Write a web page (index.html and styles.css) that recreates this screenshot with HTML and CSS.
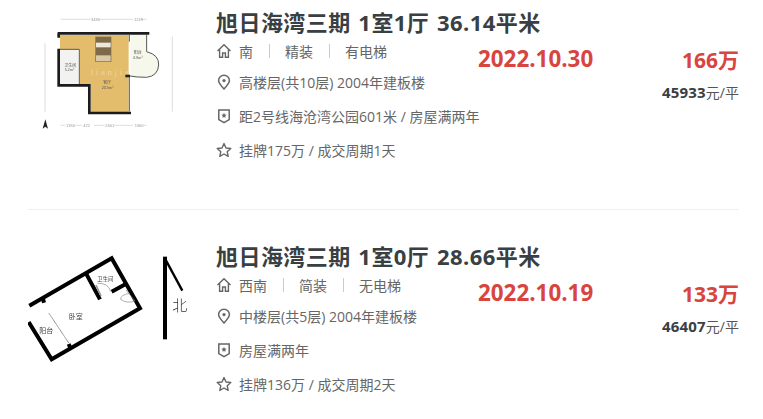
FILE: index.html
```html
<!DOCTYPE html>
<html lang="zh">
<head>
  <meta charset="UTF-8" />
  <title>成交列表</title>
  <link rel="stylesheet" href="styles.css">
</head>
<body>
  <!-- icon defs -->
  <svg class="defs" width="0" height="0">
    <symbol id="i-house" viewBox="0 0 16 16">
      <path d="M1.5 8 8 1.8 14.5 8M3.6 6.6V14.2H6.6V10H9.4V14.2H12.4V6.6" fill="none" stroke="currentColor" stroke-width="1.4"/>
    </symbol>
    <symbol id="i-pin" viewBox="0 0 16 16">
      <path d="M8 15C5 11.8 2.6 9.4 2.6 6.6A5.4 5.4 0 0 1 13.4 6.6C13.4 9.4 11 11.8 8 15Z" fill="none" stroke="currentColor" stroke-width="1.5"/>
      <circle cx="8" cy="6.6" r="1.6" fill="currentColor"/>
    </symbol>
    <symbol id="i-shield" viewBox="0 0 16 16">
      <path d="M2.8 2H13.2V11.6L8 14.6 2.8 11.6Z" fill="none" stroke="currentColor" stroke-width="1.5"/>
      <path d="M8 4.8 8.8 6.6 10.6 6.8 9.3 8 9.6 9.8 8 8.9 6.4 9.8 6.7 8 5.4 6.8 7.2 6.6Z" fill="currentColor"/>
    </symbol>
    <symbol id="i-star" viewBox="0 0 16 16">
      <path d="M8 1.6 10 6 14.8 6.5 11.2 9.7 12.2 14.4 8 12 3.8 14.4 4.8 9.7 1.2 6.5 6 6Z" fill="none" stroke="currentColor" stroke-width="1.4" stroke-linejoin="round"/>
    </symbol>
  </svg>

  <div class="list">
    <div class="item">
      <svg class="thumb plan-a" viewBox="28 8 172 150">
        <g transform="translate(20 0) scale(.3333)">
          <g class="dim">
            <path d="M122 58H212M238 58H340M368 58H380M122 376H136M166 376H186M222 376H254M282 376H340M370 376H380M75 130V335M457 110V335"/>
          </g>
          <g class="dim-text" font-size="12">
            <text x="213" y="62">3480</text>
            <text x="342" y="62">1249</text>
            <text x="138" y="380">1350</text>
            <text x="190" y="380">422</text>
            <text x="256" y="380">2401</text>
            <text x="344" y="380">1300</text>
          </g>
          <path class="floor" d="M120 105H326V336H212V252H180V148H120Z"/>
          <path class="balcony" d="M332 105H380V155Q418 165 416 195Q414 228 380 232H332Z"/>
          <rect class="bath" x="120" y="150" width="56" height="104"/>
          <rect x="226" y="110" width="48" height="76" fill="#7d6a4a"/>
          <rect x="228" y="128" width="44" height="14" fill="#eee8d8"/>
          <rect x="228" y="166" width="44" height="18" fill="#d9c9a4"/>
          <text class="mark" x="212" y="224" font-size="26" textLength="114">lianjia</text>
          <path class="wall-thin" d="M116 148H178V254"/>
          <path class="wall" d="M113 100H388M116 100V113M116 146V256H208V339H333"/>
          <path class="wall-thin" d="M328 105V125M328 230V335M380 105V155M380 155Q418 165 416 195Q414 228 380 232Q350 232 330 228"/>
          <rect x="316" y="224" width="14" height="8" fill="#222"/>
          <g class="room-text" font-size="12">
            <text x="133" y="200">卫生间</text>
            <text x="134" y="214" font-size="11">5.2m²</text>
            <text x="341" y="162">阳台</text>
            <text x="339" y="176" font-size="11">4.8m²</text>
            <text x="250" y="252">客厅</text>
            <text x="245" y="267" font-size="11">20.5m²</text>
          </g>
          <path d="M76 358 84 386 76 380 68 386Z" fill="#222"/>
        </g>
      </svg>
      <div class="info">
        <div class="title">旭日海湾三期 1室1厅 36.14平米</div>
        <div class="row first">
          <svg class="ico"><use href="#i-house"/></svg>
          <span class="tag">南</span><i class="sep"></i><span class="tag">精装</span><i class="sep"></i><span class="tag">有电梯</span>
        </div>
        <div class="row">
          <svg class="ico"><use href="#i-pin"/></svg>
          <span>高楼层(共10层) 2004年建板楼</span>
        </div>
        <div class="row">
          <svg class="ico"><use href="#i-shield"/></svg>
          <span>距2号线海沧湾公园601米 / 房屋满两年</span>
        </div>
        <div class="row">
          <svg class="ico"><use href="#i-star"/></svg>
          <span>挂牌175万 / 成交周期1天</span>
        </div>
      </div>
      <div class="date">2022.10.30</div>
      <div class="price">
        <div class="total">166万</div>
        <div class="unit"><b>45933</b>元/平</div>
      </div>
    </div>

    <div class="item">
      <svg class="thumb plan-b" viewBox="28 242 172 150">
        <g transform="translate(20 240) scale(.3333)">
          <path class="b-wall" d="M28 197 275 55 360 205 95 358 26 246"/>
          <path class="b-wall" d="M198 100 240 178M275 155 316 133"/>
          <path class="b-wall" d="M68 172 72 188M146 312 152 326" stroke-width="10"/>
          <path d="M87 220 147 310" stroke="#777" stroke-width="3" stroke-dasharray="3 1"/>
          <path d="M228 135 243 168" stroke="#999" stroke-width="5"/>
          <path class="b-thin" d="M232 130Q265 128 272 155M318 150 345 183M330 160Q300 165 302 178Q320 192 345 183"/>
          <path class="b-arrow" d="M435 50V298" stroke-width="12"/>
          <path class="b-arrow" d="M433 52 487 152" stroke-width="7"/>
          <text class="b-north" x="457" y="212" font-size="45">北</text>
          <g class="b-text" font-size="21">
            <text x="232" y="123" font-size="16">卫生间</text>
            <text x="146" y="237">卧室</text>
            <text x="58" y="279">阳台</text>
          </g>
        </g>
      </svg>
      <div class="info">
        <div class="title">旭日海湾三期 1室0厅 28.66平米</div>
        <div class="row first">
          <svg class="ico"><use href="#i-house"/></svg>
          <span class="tag">西南</span><i class="sep"></i><span class="tag">简装</span><i class="sep"></i><span class="tag">无电梯</span>
        </div>
        <div class="row">
          <svg class="ico"><use href="#i-pin"/></svg>
          <span>中楼层(共5层) 2004年建板楼</span>
        </div>
        <div class="row">
          <svg class="ico"><use href="#i-shield"/></svg>
          <span>房屋满两年</span>
        </div>
        <div class="row">
          <svg class="ico"><use href="#i-star"/></svg>
          <span>挂牌136万 / 成交周期2天</span>
        </div>
      </div>
      <div class="date">2022.10.19</div>
      <div class="price">
        <div class="total">133万</div>
        <div class="unit"><b>46407</b>元/平</div>
      </div>
    </div>
  </div>
</body>
</html>
```

FILE: styles.css
```css
* { box-sizing: border-box; }
html, body { height: 100%; }
body {
  margin: 0;
  overflow: hidden;
  background: #fff;
  color: #666;
  font-family: "Open Sans", "Noto Sans CJK SC", sans-serif;
  font-size: 14px;
}
.defs { display: block; }

.list {
  margin: 0 24px 0 28px;
}
.item {
  display: flex;
  align-items: flex-start;
  padding: 8px 0 42px;
  border-bottom: 1px solid #f0f0f0;
}
.item + .item {
  padding: 32px 0 0;
  border-bottom: none;
}

.thumb {
  flex: none;
  display: block;
  width: 172px;
  height: 150px;
  margin-right: 16px;
  filter: blur(0.35px);
}

.info {
  flex: none;
  width: 262px;
}
.title {
  height: 29px;
  line-height: 29px;
  font-size: 22px;
  font-weight: 700;
  letter-spacing: 0.45px;
  word-spacing: 1.5px;
  color: #394043;
  white-space: nowrap;
}
.row {
  display: flex;
  align-items: center;
  height: 34px;
  white-space: nowrap;
}
.row.first { height: 28px; }
.ico {
  flex: none;
  width: 16px;
  height: 16px;
  margin-right: 7px;
  color: #666;
}
.sep {
  width: 1px;
  height: 14px;
  margin: 0 15.5px;
  background: #ccc;
}

.date {
  flex: none;
  width: 115px;
  margin-top: 36px;
  line-height: 30px;
  font-size: 22.4px;
  font-weight: 700;
  color: #d8453f;
  white-space: nowrap;
}
.price {
  flex: 1;
  margin-top: 37px;
  text-align: right;
}
.total {
  line-height: 30px;
  font-size: 21px;
  font-weight: 700;
  color: #d8453f;
}
.unit {
  margin-top: 5px;
  line-height: 24px;
  font-size: 14px;
  color: #555;
}
.unit b {
  font-size: 15px;
  letter-spacing: 0.2px;
  color: #394043;
}

/* floor plan A */
.dim { fill: none; stroke: #bbb; stroke-width: 1.5; }
.dim-text { fill: #999; font-family: "Liberation Sans", sans-serif; }
.floor { fill: #e4bd6c; }
.balcony { fill: #f5f8ea; }
.bath { fill: #f2f2f0; }
.wall { fill: none; stroke: #1c1c1c; stroke-width: 8; }
.wall-thin { fill: none; stroke: #555; stroke-width: 3; }
.room-text { fill: #555; font-family: "Noto Sans CJK SC", sans-serif; }
.mark { fill: #edd49a; font-family: "Liberation Serif", serif; }

/* floor plan B */
.b-wall { fill: none; stroke: #000; stroke-width: 12; }
.b-thin { fill: none; stroke: #888; stroke-width: 2; }
.b-arrow { fill: none; stroke: #000; }
.b-north { fill: #333; font-family: "Noto Sans CJK SC", sans-serif; font-weight: 300; }
.b-text { fill: #444; font-family: "Noto Sans CJK SC", sans-serif; }
```
